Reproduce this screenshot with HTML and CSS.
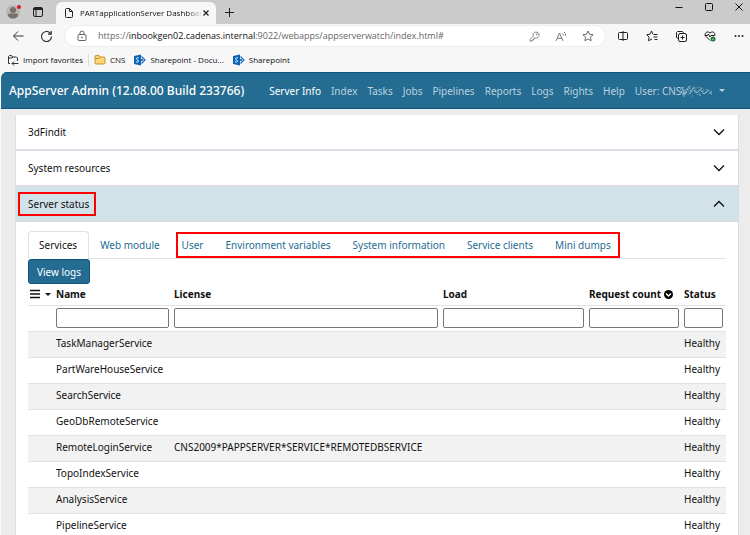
FILE: index.html
```html
<!DOCTYPE html>
<html lang="en">
<head>
<meta charset="utf-8">
<title>PARTapplicationServer Dashboard</title>
<link rel="stylesheet" href="styles.css">
</head>
<body>
<div class="browser">
  <div class="tabstrip">
    <button class="icon-btn profile" aria-label="Profile">
      <svg width="20" height="20" viewBox="0 0 20 20"><circle cx="9" cy="10" r="7" fill="#b9b5b2"/><circle cx="9" cy="8" r="3" fill="#77716e"/><path d="M4 13c0-1 .8-1.500 2-1.500h6c1.200 0 2 .5 2 1.500 0 2.200-2.200 3.500-5 3.500S4 15.200 4 13z" fill="#77716e"/><circle cx="15" cy="5" r="2" fill="#e3171b"/></svg>
    </button>
    <button class="icon-btn workspaces" aria-label="Tab actions">
      <svg width="12" height="12" viewBox="0 0 12 12" fill="none" stroke="#222"><rect x="1.500" y="1.500" width="9" height="9" rx="1.500"/><path d="M1.500 3h9" stroke-width="2"/><path d="M4 3v7.500"/></svg>
    </button>
    <div class="browser-tab">
      <svg width="10" height="12" viewBox="0 0 10 12" fill="none" stroke="#222"><path d="M1.500 2.500a1 1 0 0 1 1-1H5.500l3 3v5a1 1 0 0 1-1 1h-5a1 1 0 0 1-1-1zM5.500 1.500v3h3"/></svg>
      <span class="browser-tab-title">PARTapplicationServer Dashboard</span>
      <button class="icon-btn tab-close" aria-label="Close tab"><svg width="8" height="8" viewBox="0 0 8 8" stroke="#222" stroke-width="1.200"><path d="M1.500 1.500l5 5M6.500 1.500l-5 5"/></svg></button>
    </div>
    <button class="icon-btn new-tab" aria-label="New tab"><svg width="11" height="11" viewBox="0 0 11 11" stroke="#222"><path d="M5.500 1v9M1 5.500h9"/></svg></button>
    <div class="window-controls">
      <button class="icon-btn" aria-label="Minimize"><svg width="10" height="10" viewBox="0 0 10 10" stroke="#111"><path d="M1.500 5.500h7"/></svg></button>
      <button class="icon-btn" aria-label="Maximize"><svg width="10" height="10" viewBox="0 0 10 10" fill="none" stroke="#111"><rect x="1.500" y="1.500" width="7" height="7" rx="1"/></svg></button>
      <button class="icon-btn" aria-label="Close"><svg width="10" height="10" viewBox="0 0 10 10" stroke="#111"><path d="M1.500 1.500l7 7M8.500 1.500l-7 7"/></svg></button>
    </div>
  </div>
  <div class="toolbar">
    <button class="icon-btn" aria-label="Back"><svg width="12" height="12" viewBox="0 0 12 12" fill="none" stroke="#333"><path d="M11.500 6H1.500M6 1.500L1.500 6 6 10.500"/></svg></button>
    <button class="icon-btn" aria-label="Refresh"><svg width="13" height="13" viewBox="0 0 13 13" fill="none" stroke="#333" stroke-width="1.200"><path d="M11.500 6.500a5 5 0 1 1-1.500-3.600L11 4M11.200 1v3.200H8"/></svg></button>
    <div class="address">
      <svg width="10" height="12" viewBox="0 0 10 12" fill="none" stroke="#666"><rect x="1" y="4.500" width="8" height="6" rx="1"/><path d="M3 4.500V3a2 2 0 0 1 4 0v1.500"/><circle cx="5" cy="7.500" r=".5"/></svg>
      <span class="url">https://<b>inbookgen02.cadenas.internal</b>:9022/webapps/appserverwatch/index.html#</span>
      <span class="address-actions">
        <button class="icon-btn" aria-label="Password"><svg width="11" height="11" viewBox="0 0 11 11" fill="none" stroke="#777" stroke-width=".9"><path d="M4.300 5.200A3 3 0 1 1 6.300 7H5.500v1H4.400v1H3.200v1H1V8.500z"/><circle cx="7.700" cy="3.300" r=".5"/></svg></button>
        <button class="icon-btn" aria-label="Read aloud"><svg width="12" height="11" viewBox="0 0 12 11" fill="none" stroke="#666" stroke-width=".9"><path d="M1 10L4.500 2 8 10M2.200 7.300h4.600M7.500 2.500q1 .8 1 2M9 1q1.700 1.300 1.800 3.700"/></svg></button>
        <button class="icon-btn" aria-label="Add favorite"><svg width="12" height="12" viewBox="0 0 12 12" fill="none" stroke="#555" stroke-linejoin="round" stroke-width=".9"><path d="M6 1l1.500 3.200 3.500.5-2.500 2.500.6 3.500L6 9 2.900 10.700l.6-3.500L1 4.700l3.500-.5z"/></svg></button>
      </span>
    </div>
    <div class="toolbar-actions">
      <button class="icon-btn" aria-label="Split screen"><svg width="12" height="12" viewBox="0 0 12 12" fill="none" stroke="#222"><path d="M4.500 2.500H2.500a1 1 0 0 0-1 1v5a1 1 0 0 0 1 1h2M7.500 2.500h2a1 1 0 0 1 1 1v5a1 1 0 0 1-1 1h-2M6 1v10M4 2.500h4M4 9.500h4"/></svg></button>
      <button class="icon-btn" aria-label="Favorites"><svg width="12" height="12" viewBox="0 0 12 12" fill="none" stroke="#222" stroke-linejoin="round"><path d="M7 4.200L5.500 1 4 4.200.8 4.700l2.300 2.500-.6 3.500L6 9M7.500 4.500h4M7.500 7h4M8.500 9.500h3"/></svg></button>
      <button class="icon-btn" aria-label="Collections"><svg width="12" height="12" viewBox="0 0 12 12" fill="none" stroke="#222"><path d="M3 8.500L1.500 7.500v-5l1-1h5l1 1.500"/><rect x="3.500" y="3.500" width="8" height="8" rx="1.500"/><path d="M7.500 5.500v4M5.500 7.500h4"/></svg></button>
      <button class="icon-btn" aria-label="Browser essentials"><svg width="12" height="12" viewBox="0 0 12 12" fill="none" stroke="#222"><path d="M6 10.500L1.500 6C0 3.500 3 .2 6 3c3-2.800 6 .5 4.500 3M.8 5.500h2.700l1-1.500L6 7l1-1.500h3"/><circle cx="9" cy="9" r="2.500" fill="#187a34" stroke="none"/><path d="M7.900 9l.8.800 1.400-1.500" stroke="#fff" stroke-width=".6"/></svg></button>
      <button class="icon-btn" aria-label="Settings"><svg width="12" height="12" viewBox="0 0 12 12" fill="#222"><circle cx="2.500" cy="6" r="1"/><circle cx="6" cy="6" r="1"/><circle cx="9.500" cy="6" r="1"/></svg></button>
    </div>
  </div>
  <div class="favorites">
    <a href="#" class="favorite"><svg width="12" height="12" viewBox="0 0 12 12" fill="none" stroke="#333"><path d="M3 9.500H1.500v-7l1-1h2l1 1.500h4l1 1v3M1.500 4H5l1-1M11.500 9.500H5M7 7.500l-2 2 2 2"/></svg>Import favorites</a>
    <span class="divider"></span>
    <a href="#" class="favorite"><svg width="12" height="12" viewBox="0 0 12 12"><path d="M1 2.500a1 1 0 0 1 1-1h3l1 1.500h4a1 1 0 0 1 1 1V9a1 1 0 0 1-1 1H2a1 1 0 0 1-1-1z" fill="#ffd778" stroke="#b78218" stroke-width=".8"/><path d="M1 4.500h4L6.500 3" fill="none" stroke="#b78218" stroke-width=".8"/></svg>CNS</a>
    <a href="#" class="favorite"><svg class="sharepoint" width="12" height="12" viewBox="0 0 12 12"><use href="#sp"/></svg>Sharepoint - Docu...</a>
    <a href="#" class="favorite"><svg class="sharepoint" width="12" height="12" viewBox="0 0 12 12"><g id="sp"><path d="M0 2l7-1.500v11L0 10z" fill="#0b63b5"/><path d="M5 4.200Q4.500 3.600 3.500 3.700C2 4 2.300 5.500 3.500 5.900S4.900 8 3.300 8.100Q2.400 8.100 1.900 7.500" fill="none" stroke="#fff"/><path d="M7.500 2.500L11 6 7.500 9.500" fill="none" stroke="#2578c2" stroke-width="1.300"/><circle cx="8" cy="6" r="1.200" fill="#2578c2"/></g></svg>Sharepoint</a>
  </div>
</div>

<div class="app">
  <nav class="navbar">
    <a href="#" class="brand">AppServer Admin (12.08.00 Build 233766)</a>
    <a href="#" class="nav-link active">Server Info</a>
    <a href="#" class="nav-link">Index</a>
    <a href="#" class="nav-link">Tasks</a>
    <a href="#" class="nav-link">Jobs</a>
    <a href="#" class="nav-link">Pipelines</a>
    <a href="#" class="nav-link">Reports</a>
    <a href="#" class="nav-link">Logs</a>
    <a href="#" class="nav-link">Rights</a>
    <a href="#" class="nav-link">Help</a>
    <button class="nav-link user">User: CNS\<svg class="redacted" width="34" height="15" viewBox="0 0 34 15" fill="none" stroke="#b3cedb" stroke-width=".8"><path d="M0 5l3 7 2-5 1 4 3-8 2 6 2-4 3 5 4-3 4 4 4-3" stroke-dasharray="2 1"/><path d="M1 9l4 3 2-7 3 6 4-7 3 6 4-5 3 6 5-4 3 2" stroke-dasharray="1 1"/><path d="M3 4l5 8 6-4 4 4 3-7 4 6 2-4 5 5M10 3l7 2 4-1 3 3 5-1" stroke-dasharray="1 2"/><path d="M3 13h2M12 13h1M19 12h2M29 10h3"/></svg><span class="caret"></span></button>
  </nav>

  <main class="accordion">
    <button class="accordion-header"><span>3dFindit</span><svg class="chevron" width="12" height="12" viewBox="0 0 12 12"><path d="M1 3.500l5 5 5-5"/></svg></button>
    <button class="accordion-header"><span>System resources</span><svg class="chevron" width="12" height="12" viewBox="0 0 12 12"><path d="M1 3.500l5 5 5-5"/></svg></button>
    <button class="accordion-header open" aria-expanded="true"><span class="marked">Server status</span><svg class="chevron" width="12" height="12" viewBox="0 0 12 12"><path d="M1 8.500l5-5 5 5"/></svg></button>
    <section class="panel">
      <div class="tabs">
        <a href="#" class="tab selected">Services</a>
        <a href="#" class="tab">Web module</a>
        <div class="tab-group marked">
          <a href="#" class="tab">User</a>
          <a href="#" class="tab">Environment variables</a>
          <a href="#" class="tab">System information</a>
          <a href="#" class="tab">Service clients</a>
          <a href="#" class="tab">Mini dumps</a>
        </div>
      </div>
      <button class="primary">View logs</button>
      <table>
        <colgroup><col class="col-menu"><col class="col-name"><col><col class="col-load"><col class="col-count"><col class="col-status"></colgroup>
        <thead>
          <tr>
            <th><button class="icon-btn columns" aria-label="Columns"><svg width="10" height="10" viewBox="0 0 10 10" stroke="#111" stroke-width="1.400"><path d="M0 1.500h10M0 5h10M0 8.500h10"/></svg><span class="caret"></span></button></th>
            <th>Name</th><th>License</th><th>Load</th>
            <th>Request count <svg class="sort" width="9" height="9" viewBox="0 0 9 9"><circle cx="4.500" cy="4.500" r="4.500" fill="#000"/><path d="M2 3.500l2.500 2.500L7 3.500" fill="none" stroke="#fff" stroke-width="1.400"/></svg></th>
            <th>Status</th>
          </tr>
          <tr class="filters">
            <td></td>
            <td><input type="text" aria-label="Filter name"></td>
            <td><input type="text" aria-label="Filter license"></td>
            <td><input type="text" aria-label="Filter load"></td>
            <td><input type="text" aria-label="Filter request count"></td>
            <td><input type="text" aria-label="Filter status"></td>
          </tr>
        </thead>
        <tbody>
          <tr><td></td><td>TaskManagerService</td><td></td><td></td><td></td><td>Healthy</td></tr>
          <tr><td></td><td>PartWareHouseService</td><td></td><td></td><td></td><td>Healthy</td></tr>
          <tr><td></td><td>SearchService</td><td></td><td></td><td></td><td>Healthy</td></tr>
          <tr><td></td><td>GeoDbRemoteService</td><td></td><td></td><td></td><td>Healthy</td></tr>
          <tr><td></td><td>RemoteLoginService</td><td>CNS2009*PAPPSERVER*SERVICE*REMOTEDBSERVICE</td><td></td><td></td><td>Healthy</td></tr>
          <tr><td></td><td>TopoIndexService</td><td></td><td></td><td></td><td>Healthy</td></tr>
          <tr><td></td><td>AnalysisService</td><td></td><td></td><td></td><td>Healthy</td></tr>
          <tr><td></td><td>PipelineService</td><td></td><td></td><td></td><td>Healthy</td></tr>
        </tbody>
      </table>
    </section>
  </main>
</div>
</body>
</html>
```
FILE: styles.css
```css
* { box-sizing: border-box; }
html { height: 100%; }
body {
  margin: 0;
  height: 100%;
  overflow: hidden;
  display: flex;
  flex-direction: column;
  background: #f7f7f7;
  color: #111;
  font: 10px/16px "Noto Sans", "Open Sans", sans-serif;
}
a { color: inherit; text-decoration: none; }
button {
  margin: 0;
  padding: 0;
  border: 0;
  background: none;
  color: inherit;
  font: inherit;
  text-align: left;
}
svg { flex: none; display: block; }
.icon-btn { display: flex; align-items: center; flex: none; }

/* Browser chrome */
.browser { flex: none; font-family: "Open Sans", "Noto Sans", sans-serif; font-size: 8px; }
.tabstrip {
  display: flex;
  align-items: center;
  height: 24px;
  padding-left: 4px;
  background: #cbcbcb;
}
.workspaces { margin-left: 8px; margin-right: 12px; }
.browser-tab {
  align-self: flex-end;
  display: flex;
  align-items: center;
  gap: 6px;
  width: 160px;
  height: 22px;
  padding: 0 6px 0 8px;
  border-radius: 6px 6px 0 0;
  background: #f7f7f7;
}
.browser-tab-title {
  flex: 1;
  min-width: 0;
  white-space: nowrap;
  mask-image: linear-gradient(to right, #000 88%, transparent);
}
.tab-close { margin-left: -6px; }
.new-tab { margin-left: 8px; }
.window-controls {
  display: flex;
  align-self: flex-start;
  gap: 20px;
  margin-left: auto;
  padding: 2px 6px;
}
.toolbar {
  display: flex;
  align-items: center;
  gap: 16px;
  height: 24px;
  padding: 0 5px 0 12px;
}
.address {
  flex: 1;
  display: flex;
  align-items: center;
  gap: 11px;
  height: 22px;
  margin-left: -5px;
  padding: 0 11px 0 12px;
  border: 1px solid #ededed;
  border-radius: 11px;
  background: #fff;
}
.url { flex: 1; color: #666; font-size: 9px; }
.url b { color: #111; font-weight: 400; }
.address-actions { display: flex; gap: 15px; }
.toolbar-actions { display: flex; gap: 17px; margin-left: -5px; }
.favorites {
  display: flex;
  align-items: center;
  height: 24px;
  padding-left: 7px;
  gap: 9px;
}
.favorite { display: flex; align-items: center; gap: 4px; }
.divider { width: 1px; height: 12px; margin-left: -4px; margin-right: -4px; background: #ddd; }

/* Application */
.app {
  flex: 1;
  min-height: 0;
  margin-left: 1px;
  border-radius: 6px 0 0 0;
  background: #ececec;
  overflow: hidden;
}
.navbar {
  display: flex;
  align-items: center;
  gap: 10px;
  height: 37px;
  padding: 0 8px;
  border-top: 1px solid #0e557c;
  border-bottom: 1px solid #0e557c;
  background: #246c92;
  color: #bcd2de;
  white-space: nowrap;
}
.brand { margin-right: 15px; color: #fff; font-size: 12px; font-weight: 500; }
.nav-link.active { color: #fff; }
.user { display: flex; align-items: center; }
.redacted { margin-left: -5px; }
.caret {
  border: 3px solid transparent;
  border-top-color: currentColor;
  border-bottom: 0;
}
.user .caret { margin-left: 5px; }

.accordion { margin: 6px 11px 0 14px; }
.accordion-header {
  display: flex;
  align-items: center;
  justify-content: space-between;
  width: 100%;
  height: 36px;
  padding: 0 13px 0 12px;
  border: 1px solid #d9dce3;
  border-bottom-width: 2px;
  border-top: 0;
  background: #fff;
}
.accordion-header.open { height: 35px; background: #d1e2e9; }
.chevron { fill: none; stroke: #111; stroke-width: 1.3px; }
.panel {
  padding: 9px 12px 0;
  border: 1px solid #d9dce3;
  border-top: 0;
  background: #fff;
}

/* Red callout frames drawn over the interface */
.marked { position: relative; }
.marked::after {
  content: "";
  position: absolute;
  inset: -4px -7px -4px -10px;
  border: 2px solid #ff0000;
}
.tab-group.marked::after { inset: 1px 2px 0 5px; }

.tabs { display: flex; border-bottom: 1px solid #dee2e6; color: #246c92; white-space: nowrap; }
.tab { display: block; padding: 6px 11px 5px; }
.tab.selected {
  margin-bottom: -1px;
  padding: 5px 11px 6px 10px;
  border: 1px solid #dee2e6;
  border-bottom: 0;
  border-radius: 4px 4px 0 0;
  background: #fff;
  color: #111;
}
.tab-group { display: flex; }
.primary {
  display: block;
  height: 25px;
  padding: 0 8px;
  border: 1px solid #0e557c;
  border-radius: 3px;
  background: #246c92;
  color: #fff;
}

table { width: 100%; table-layout: fixed; border-collapse: collapse; }
.col-menu { width: 26px; }
.col-name { width: 118px; }
.col-load { width: 146px; }
.col-count { width: 95px; }
.col-status { width: 44px; }
th, td {
  height: 26px;
  padding: 0 3px 3px 2px;
  border-bottom: 1px solid #dee2e6;
  text-align: left;
  white-space: nowrap;
}
th { height: 21px; padding-bottom: 0; }
.filters td { padding-bottom: 0; }
.columns { gap: 5px; }
.sort { display: inline-block; vertical-align: -1px; }
tbody tr:nth-child(odd) { background: #f2f2f2; }
input {
  display: block;
  width: 100%;
  height: 20px;
  border: 1px solid #777;
  border-radius: 2px;
  background: #fff;
  font: inherit;
}
```
